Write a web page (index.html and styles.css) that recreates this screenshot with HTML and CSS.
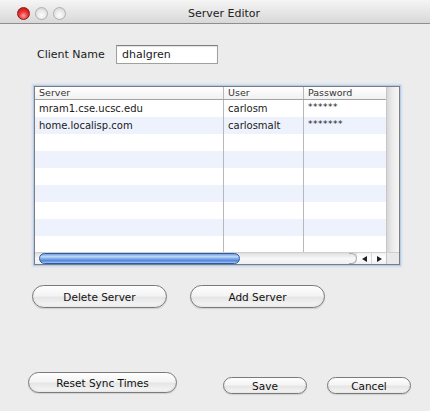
FILE: index.html
```html
<!DOCTYPE html>
<html lang="en">
<head>
<meta charset="utf-8">
<title>Server Editor</title>
<link rel="stylesheet" href="styles.css">
</head>
<body>
<div class="window">
  <header class="titlebar">
    <div class="lights">
      <span class="light close"></span>
      <span class="light"></span>
      <span class="light"></span>
    </div>
    <div class="title">Server Editor</div>
    <div></div>
  </header>

  <main class="content">
    <div class="client-row">
      <label class="client-label">Client Name</label>
      <div class="field">dhalgren</div>
    </div>

    <section class="table">
      <div class="table-body">
        <div class="grid">
          <div class="thead">
            <div class="cell">Server</div>
            <div class="cell">User</div>
            <div class="cell">Password</div>
          </div>
          <div class="rows">
            <div class="row"><div class="cell">mram1.cse.ucsc.edu</div><div class="cell">carlosm</div><div class="cell pw">******</div></div>
            <div class="row"><div class="cell">home.localisp.com</div><div class="cell">carlosmalt</div><div class="cell pw">*******</div></div>
            <div class="row"><div class="cell"></div><div class="cell"></div><div class="cell"></div></div>
            <div class="row"><div class="cell"></div><div class="cell"></div><div class="cell"></div></div>
            <div class="row"><div class="cell"></div><div class="cell"></div><div class="cell"></div></div>
            <div class="row"><div class="cell"></div><div class="cell"></div><div class="cell"></div></div>
            <div class="row"><div class="cell"></div><div class="cell"></div><div class="cell"></div></div>
            <div class="row"><div class="cell"></div><div class="cell"></div><div class="cell"></div></div>
            <div class="row"><div class="cell"></div><div class="cell"></div><div class="cell"></div></div>
          </div>
        </div>
        <div class="vscroll"></div>
      </div>
      <div class="hscroll">
        <div class="track"><div class="thumb"></div><div class="track-end"></div></div>
        <div class="arrows">
          <span class="arrow"><i class="tri left"></i></span>
          <span class="arrow"><i class="tri right"></i></span>
        </div>
        <div class="corner"></div>
      </div>
    </section>

    <div class="actions">
      <button class="btn">Delete Server</button>
      <button class="btn">Add Server</button>
    </div>

    <div class="footer">
      <button class="btn btn-reset">Reset Sync Times</button>
      <button class="btn btn-small">Save</button>
      <button class="btn btn-small">Cancel</button>
    </div>
  </main>
</div>
</body>
</html>
```

FILE: styles.css
```css
* { box-sizing: border-box; }

html, body { margin: 0; padding: 0; }

body {
  width: 430px;
  height: 411px;
  overflow: hidden;
  background: #ececec;
  font-family: "DejaVu Sans", "Liberation Sans", sans-serif;
  color: #1a1a1a;
}

/* ---- title bar ---- */
.titlebar {
  height: 24px;
  display: grid;
  grid-template-columns: 1fr auto 1fr;
  align-items: center;
  background: linear-gradient(#f5f5f5, #d8d8d8);
  border-bottom: 1px solid #8e8e8e;
}

.lights {
  display: flex;
  gap: 5px;
  padding-left: 17px;
  padding-top: 3px;
}

.light {
  width: 13px;
  height: 13px;
  border-radius: 50%;
  border: 1px solid #b0b0b0;
  background: radial-gradient(circle at 50% 65%, #fefefe 0, #ebebeb 45%, #cdcdcd 100%);
}

.light.close {
  border-color: #8f1a1a;
  background: radial-gradient(circle at 50% 70%, #ffa0a0 0, #ec3434 45%, #b50c0c 100%);
}

.title {
  font-size: 11px;
  padding-left: 18px;
  padding-top: 3px;
  color: #222;
}

/* ---- client name ---- */
.client-row {
  display: flex;
  align-items: center;
  height: 19px;
  margin: 21px 0 0 37px;
}

.client-label {
  width: 79px;
  font-size: 11px;
}

.field {
  width: 102px;
  height: 19px;
  background: #fff;
  border: 1px solid #a0a0a0;
  border-top-color: #7e7e7e;
  box-shadow: inset 0 1px 1px rgba(0, 0, 0, 0.12);
  font-size: 11px;
  line-height: 18px;
  padding-left: 5px;
}

/* ---- server table ---- */
.table {
  width: 366px;
  margin: 22px 0 0 34px;
  border: 1px solid #7d7d7d;
  background: #fff;
  box-shadow: 0 0 0 1px #b7cbe6, 0 0 2px 2px #cddbee;
}

.table-body {
  display: flex;
  height: 165px;
}

.grid { width: 351px; }

.thead,
.row {
  display: grid;
  grid-template-columns: 189px 80px 82px;
}

.thead {
  height: 13px;
  border-bottom: 1px solid #a3a3a3;
  background: linear-gradient(#ffffff, #f1f1f1);
  font-size: 9.5px;
  line-height: 12px;
  color: #333;
}

.cell {
  padding-left: 4px;
  border-right: 1px solid #b8b8b8;
  white-space: nowrap;
  overflow: hidden;
}

.cell:last-child { border-right: none; }

.rows {
  height: 152px;
  overflow: hidden;
}

.row {
  height: 17px;
  font-size: 10px;
  line-height: 17px;
}

.row:nth-child(even) { background: #edf2fc; }

.pw {
  font-size: 9px;
  line-height: 14px;
  letter-spacing: 0.5px;
}

.vscroll {
  width: 13px;
  border-left: 1px solid #c6c6c6;
  background: linear-gradient(to right, #d6d6d6, #ececec 45%, #f6f6f6);
}

/* horizontal scroller */
.hscroll {
  display: flex;
  height: 12px;
  border-top: 1px solid #cfcfcf;
}

.track {
  flex: 1;
  display: flex;
  align-items: center;
  padding-left: 4px;
  background: linear-gradient(#dedede, #f8f8f8 50%, #efefef);
}

.thumb {
  width: 201px;
  height: 11px;
  border-radius: 6px;
  border: 1px solid #2d5aa7;
  background: linear-gradient(#6f9ee0, #c3dbf7 30%, #79a6e6 55%, #4f86d8 75%, #a5c6f2);
}

.track-end {
  margin-left: auto;
  width: 8px;
  height: 11px;
  border: 1px solid #a9a9a9;
  border-left: none;
  border-radius: 0 6px 6px 0;
}

.arrows {
  width: 29px;
  display: flex;
  background: linear-gradient(#f2f2f2, #ffffff 50%, #efefef);
}

.arrow {
  flex: 1;
  display: flex;
  align-items: center;
  justify-content: center;
}

.arrow + .arrow { border-left: 1px solid #d6d6d6; }

.tri {
  width: 0;
  height: 0;
  border-top: 3px solid transparent;
  border-bottom: 3px solid transparent;
}

.tri.left { border-right: 5px solid #222; }
.tri.right { border-left: 5px solid #222; }

.corner {
  width: 13px;
  border-left: 1px solid #c6c6c6;
  background: #e9e9e9;
}

/* ---- buttons ---- */
.btn {
  appearance: none;
  display: flex;
  align-items: center;
  justify-content: center;
  padding: 0;
  font-family: inherit;
  font-size: 10.5px;
  color: #111;
  border: 1px solid #7a7a7a;
  border-radius: 12px;
  background: linear-gradient(#fefefe, #f4f4f4 45%, #e6e6e6 55%, #f7f7f7);
  box-shadow: inset 0 -1px 2px rgba(0, 0, 0, 0.08), 0 1px 1px rgba(0, 0, 0, 0.12);
}

.actions {
  display: flex;
  gap: 23px;
  margin: 20px 0 0 32px;
}

.actions .btn {
  width: 135px;
  height: 23px;
}

.footer {
  display: flex;
  align-items: flex-end;
  margin: 64px 0 0 28px;
}

.btn-reset {
  width: 149px;
  height: 21px;
  margin-right: 46px;
}

.btn-small {
  width: 84px;
  height: 17px;
  border-radius: 9px;
  margin-bottom: -1px;
}

.btn-small + .btn-small { margin-left: 20px; }
```
